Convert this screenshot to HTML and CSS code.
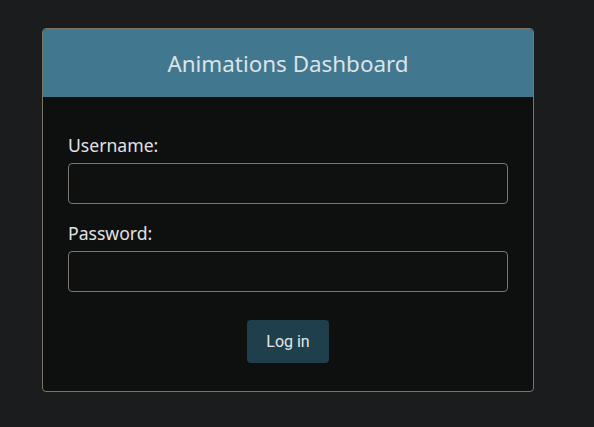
FILE: index.html
```html
<!DOCTYPE html>
<html>
<head>
<meta charset="utf-8">
<link rel="stylesheet" href="styles.css">
</head>
<body>
<div class="card">
  <div class="card-header">Animations Dashboard</div>
  <form class="card-body">
    <label class="label" for="u">Username:</label>
    <input class="input" id="u" type="text">
    <label class="label label-second" for="p">Password:</label>
    <input class="input" id="p" type="password">
    <div class="actions">
      <button class="btn" type="button">Log in</button>
    </div>
  </form>
</div>
</body>
</html>
```
FILE: styles.css
```css
html, body {
  margin: 0;
  padding: 0;
  background: #1b1c1e;
  height: 100%;
}
body {
  font-family: "Noto Sans", "Open Sans", sans-serif;
  color: #e2e2e2;
  padding: 28px 0 0 42px;
  box-sizing: border-box;
}
.card {
  width: 492px;
  box-sizing: border-box;
  border: 1px solid #7c7668;
  border-radius: 4px;
  background: #0e0f0f;
  overflow: hidden;
}
.card-header {
  height: 68px;
  background: #41778f;
  color: #dde3e6;
  font-size: 22.4px;
  display: flex;
  align-items: center;
  justify-content: center;
}
.card-body {
  display: flex;
  flex-direction: column;
  padding: 36px 25px 28px;
  margin: 0;
}
.label {
  font-size: 17.6px;
  line-height: 24px;
  margin-bottom: 6px;
}
.label-second {
  margin-top: 17px;
}
.input {
  height: 41px;
  box-sizing: border-box;
  border: 1px solid #7b776f;
  border-radius: 4px;
  background: #0f1111;
  color: #e2e2e2;
  margin: 0;
  padding: 0 10px;
  font-size: 16px;
  outline: none;
}
.actions {
  display: flex;
  justify-content: center;
  margin-top: 28px;
}
.btn {
  width: 82px;
  height: 43px;
  border: none;
  border-radius: 4px;
  background: #1f3f4d;
  color: #e6e6e6;
  font-family: Roboto, "Noto Sans", sans-serif;
  font-size: 16px;
  cursor: pointer;
}
```
